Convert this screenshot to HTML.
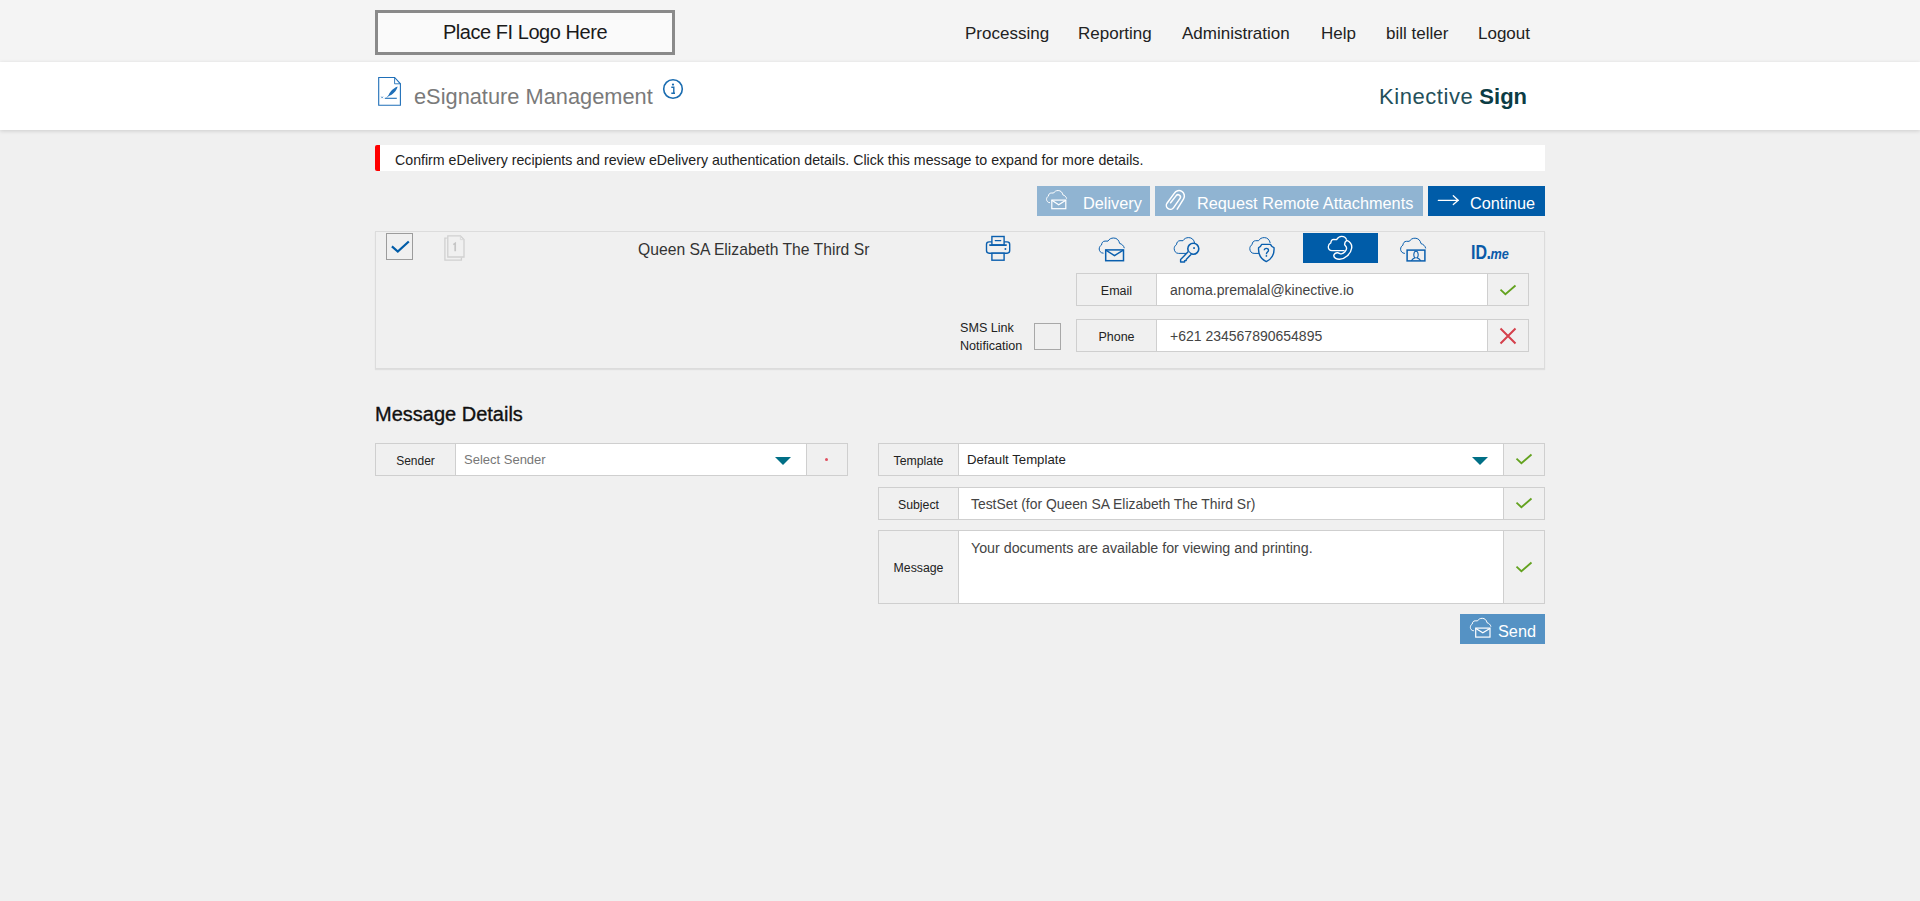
<!DOCTYPE html>
<html><head><meta charset="utf-8">
<style>
*{box-sizing:border-box;margin:0;padding:0}
html,body{width:1920px;height:901px;overflow:hidden;background:#f0f0f0;font-family:"Liberation Sans",sans-serif;color:#222}
.a{position:absolute;white-space:nowrap}
#top{position:absolute;left:0;top:0;width:1920px;height:62px;background:#f4f4f4}
#logo{position:absolute;left:375px;top:10px;width:300px;height:45px;border:3px solid #8a8a8a;background:#fafafa;font-size:20px;letter-spacing:-0.45px;color:#1a1a1a;text-align:center;line-height:38px}
.nav{position:absolute;top:24px;font-size:17px;color:#222;white-space:nowrap;line-height:20px}
#sub{position:absolute;left:0;top:62px;width:1920px;height:68px;background:#fff;box-shadow:0 1px 4px rgba(0,0,0,0.15)}
#title{position:absolute;left:414px;top:84px;font-size:21.8px;color:#7a7a7a;white-space:nowrap;line-height:26px}
#brand{position:absolute;left:1379px;top:84px;font-size:22px;color:#0c3c44;white-space:nowrap;line-height:26px}
#alert{position:absolute;left:375px;top:145px;width:1170px;height:26px;background:#fff;border-left:5px solid #f00;border-radius:2px 0 0 2px}
#alert span{position:absolute;left:15px;top:6.5px;font-size:14.2px;color:#222;white-space:nowrap;line-height:16px}
.btn{position:absolute;top:186px;height:30px;background:#90b4d2;color:#fff;font-size:16.3px;white-space:nowrap}
.btn span{position:absolute;top:7px;line-height:20px}
.btn svg{position:absolute}
#rowbox{position:absolute;left:375px;top:231px;width:1170px;height:138px;border:1px solid #dcdcdc;background:#f0f0f0;box-shadow:0 1px 1px rgba(0,0,0,0.07)}
.box{position:absolute;background:#f0f0f0;border:1px solid #cfcfcf}
.inp{position:absolute;background:#fff;border-top:1px solid #cfcfcf;border-bottom:1px solid #cfcfcf}
.lt{position:absolute;width:100%;text-align:center;white-space:nowrap;color:#222}
.it{position:absolute;white-space:nowrap;color:#444}
svg{display:block}
</style></head><body>
<div id="top">
  <div id="logo">Place FI Logo Here</div>
  <div class="nav" style="left:965px">Processing</div>
  <div class="nav" style="left:1078px">Reporting</div>
  <div class="nav" style="left:1182px">Administration</div>
  <div class="nav" style="left:1321px">Help</div>
  <div class="nav" style="left:1386px">bill teller</div>
  <div class="nav" style="left:1478px">Logout</div>
</div>
<div id="sub"></div>
<!-- doc icon -->
<svg class="a" style="left:377px;top:76px" width="26" height="32" viewBox="0 0 26 32">
  <path d="M1.7 1.5 H17.6 L23.4 7.8 V29.2 H1.7 Z" fill="none" stroke="#1f6fb8" stroke-width="1.1"/>
  <path d="M17.6 1.5 V7.8 H23.4" fill="none" stroke="#1f6fb8" stroke-width="0.9"/>
  <path d="M7.8 22.3 H19.8" stroke="#1f6fb8" stroke-width="1.1"/>
  <path d="M4.3 20.6 l1.6 1.6 M5.9 20.6 l-1.6 1.6" stroke="#1f6fb8" stroke-width="0.7"/>
  <path d="M11.2 20.2 C12 16.5 15.5 12.5 20.6 10.4 C19.8 14.5 16 18.5 11.2 20.2 Z" fill="#1f6fb8"/>
  <path d="M9.8 21.6 L12.5 18.8" stroke="#1f6fb8" stroke-width="0.8"/>
</svg>
<div id="title">eSignature Management</div>
<svg class="a" style="left:662px;top:78px" width="22" height="22" viewBox="0 0 22 22">
  <circle cx="11" cy="11" r="9.3" fill="none" stroke="#1a6cb0" stroke-width="1.6"/>
  <circle cx="11" cy="6.6" r="1.1" fill="#1a6cb0"/>
  <path d="M9.3 9.2 H11.8 V15 M9.3 15.2 H13" fill="none" stroke="#1a6cb0" stroke-width="1.4"/>
</svg>
<div id="brand"><span style="letter-spacing:0.55px;color:#24505a">Kinective</span> <b>Sign</b></div>

<div id="alert"><span>Confirm eDelivery recipients and review eDelivery authentication details. Click this message to expand for more details.</span></div>

<div class="btn" style="left:1037px;width:113px">
  <svg style="left:3px;top:0px" width="36" height="30" viewBox="0 0 36 30">
    <path transform="translate(11.2 13.5) scale(0.8)" d="M-1.5 4 C-4.5 4 -5.8 1.5 -5.8 -0.2 C-5.8 -2 -4.8 -3.5 -3.5 -4.2 C-3.3 -6.5 -2 -8.1 0 -8.1 L3 -8.1 C4.2 -10.2 6.2 -11.2 8.7 -11.2 C11.8 -11.2 14 -9 14.6 -5.8 C16.8 -5.2 18.8 -3.5 19.3 -1" fill="none" stroke="#ffffff" stroke-width="1.0" vector-effect="non-scaling-stroke"/>
    <rect x="11.8" y="14.1" width="14" height="8.6" fill="none" stroke="#ffffff" stroke-width="1.2"/>
    <path d="M11.8 14.3 L18.7 18.7 L25.8 14.3" fill="none" stroke="#ffffff" stroke-width="1.2"/>
  </svg>
  <span style="left:46px">Delivery</span></div>
<div class="btn" style="left:1155px;width:268px">
  <svg style="left:0px;top:0px" width="40" height="30" viewBox="0 0 40 30">
    <path d="M15.6 16.8 L21.2 9.6 A2.4 2.4 0 0 1 25.2 12.2 L18.6 21.6 A3.9 3.9 0 0 1 12 17.2 L19.4 7.2 A5.3 5.3 0 0 1 28.6 12.8 L22.2 23.2" fill="none" stroke="#ffffff" stroke-width="1.5" stroke-linecap="round"/>
  </svg>
  <span style="left:42px">Request Remote Attachments</span></div>
<div class="btn" style="left:1428px;width:117px;background:#005ca8">
  <svg style="left:0px;top:0px" width="40" height="30" viewBox="0 0 40 30">
    <path d="M10.3 14.3 H30.5 M25.3 9.8 L30.2 14.3 L25.3 18.6" fill="none" stroke="#ffffff" stroke-width="1.3" stroke-linecap="round"/>
  </svg>
  <span style="left:42px">Continue</span></div>

<div id="rowbox"></div>
<!-- row contents -->
<div class="a" style="left:386px;top:233px;width:27px;height:27px;border:1.5px solid #9c9c9c"></div>
<svg class="a" style="left:386px;top:233px" width="27" height="27" viewBox="0 0 27 27">
  <path d="M5.9 13.4 L11.8 18.6 L22.8 8.5" fill="none" stroke="#005ca8" stroke-width="2.2"/>
</svg>
<svg class="a" style="left:441px;top:233px" width="28" height="30" viewBox="0 0 28 30">
  <path d="M5.8 5.2 H3.9 V27.2 H20.4 V24.5" fill="none" stroke="#d0d0d0" stroke-width="1.3"/>
  <path d="M6.8 2.9 H19.4 L23 6.6 V24 H6.8 Z" fill="none" stroke="#d0d0d0" stroke-width="1.3"/>
  <path d="M19.4 2.9 V6.6 H23" fill="none" stroke="#d8d8d8" stroke-width="0.9"/>
  <path d="M12.3 11.6 L14.2 10.4 V18.2" fill="none" stroke="#c6c6c6" stroke-width="1.7"/>
</svg>
<div class="a" style="left:638px;top:241px;font-size:15.7px;color:#333;line-height:18px">Queen SA Elizabeth The Third Sr</div>

<!-- printer -->
<svg class="a" style="left:980px;top:230px" width="36" height="36" viewBox="0 0 36 36">
  <rect x="6.5" y="11.9" width="23.2" height="11.3" rx="2.6" fill="none" stroke="#0a5fae" stroke-width="1.4"/>
  <rect x="11.9" y="6.5" width="12.2" height="8.5" fill="#f0f0f0" stroke="#0a5fae" stroke-width="1.4"/>
  <path d="M15.2 10.6 H20.8" stroke="#0a5fae" stroke-width="1.2" stroke-linecap="round"/>
  <path d="M9.8 15.1 H26.2" stroke="#0a5fae" stroke-width="1.6" stroke-linecap="round"/>
  <circle cx="25.4" cy="19" r="0.95" fill="#0a5fae"/>
  <rect x="11.9" y="23.2" width="12.2" height="7" fill="#f0f0f0" stroke="#0a5fae" stroke-width="1.4"/>
</svg>
<!-- email cloud -->
<svg class="a" style="left:1094px;top:232px" width="36" height="34" viewBox="0 0 36 34">
  <path transform="translate(11 17.2) scale(1)" d="M-1.5 4 C-4.5 4 -5.8 1.5 -5.8 -0.2 C-5.8 -2 -4.8 -3.5 -3.5 -4.2 C-3.3 -6.5 -2 -8.1 0 -8.1 L3 -8.1 C4.2 -10.2 6.2 -11.2 8.7 -11.2 C11.8 -11.2 14 -9 14.6 -5.8 C16.8 -5.2 18.8 -3.5 19.3 -1" fill="none" stroke="#0a5fae" stroke-width="1.0" vector-effect="non-scaling-stroke"/>
  <rect x="11.7" y="17.9" width="17.8" height="10.8" fill="#f0f0f0" stroke="#0a5fae" stroke-width="1.5"/>
  <path d="M11.8 18.2 L20.5 23.6 L29.3 18.2" fill="none" stroke="#0a5fae" stroke-width="1.4"/>
</svg>
<!-- key cloud -->
<svg class="a" style="left:1170px;top:232px" width="36" height="34" viewBox="0 0 36 34">
  <path transform="translate(10 16.8) scale(1)" d="M8 4.6 L-1.5 4.6 C-4.5 4.6 -5.8 2 -5.8 -0.2 C-5.8 -2 -4.8 -3.5 -3.5 -4.2 C-3.3 -6.5 -2 -8.1 0 -8.1 L3 -8.1 C4.2 -10.2 6.2 -11.2 8.7 -11.2 C11.8 -11.2 14 -9 14.6 -5.8" fill="none" stroke="#0a5fae" stroke-width="1.0" vector-effect="non-scaling-stroke"/>
  <circle cx="23.3" cy="16.8" r="5.5" fill="#f0f0f0" stroke="#0a5fae" stroke-width="1.6"/>
  <rect x="23.2" y="15.2" width="1.7" height="1.7" fill="#0a5fae"/>
  <path d="M18.4 19.6 L10.6 27.4 V30 H14.6 V28.6 H16.2 V27.4 L21 22.4" fill="#f0f0f0" stroke="#0a5fae" stroke-width="1.4" stroke-linejoin="round"/>
</svg>
<!-- shield cloud -->
<svg class="a" style="left:1246px;top:232px" width="36" height="34" viewBox="0 0 36 34">
  <path transform="translate(9.6 16.8) scale(1)" d="M8 4.6 L-1.5 4.6 C-4.5 4.6 -5.8 2 -5.8 -0.2 C-5.8 -2 -4.8 -3.5 -3.5 -4.2 C-3.3 -6.5 -2 -8.1 0 -8.1 L3 -8.1 C4.2 -10.2 6.2 -11.2 8.7 -11.2 C11.8 -11.2 14 -9 14.6 -5.8" fill="none" stroke="#0a5fae" stroke-width="1.0" vector-effect="non-scaling-stroke"/>
  <path d="M15.6 12.4 H24.6 C25.2 14 26.5 15.2 28 15.6 C28.6 22.5 25.5 27 20.3 29.6 C15 27 12 22.5 12.6 15.6 C14 15.2 15 14 15.6 12.4 Z" fill="#f0f0f0" stroke="#0a5fae" stroke-width="1.4" stroke-linejoin="round"/>
  <path d="M18.3 18.3 C18.3 15.8 22.5 15.8 22.5 18.2 C22.5 20 20.4 20.2 20.4 22.2" fill="none" stroke="#0a5fae" stroke-width="1.4"/>
  <circle cx="20.4" cy="23.9" r="0.85" fill="#0a5fae"/>
</svg>
<!-- phone selected -->
<div class="a" style="left:1303px;top:233px;width:75px;height:30px;background:#005ca8"></div>
<svg class="a" style="left:1322px;top:232px" width="36" height="34" viewBox="0 0 36 34">
  <path d="M22.6 18.7 L10 18.7 C7.5 18.7 6.2 16.8 6.3 14.8 C6.4 12.8 7.5 11.5 8.8 10.9 C9 8.8 10.2 7.3 11.8 7.3 L14.6 7.6 C15.8 5.5 17.5 4.3 19.6 4.3 C22 4.3 24 5.8 24.6 7.8" fill="none" stroke="#ffffff" stroke-width="1.3"/>
  <path d="M24.8 8.3 C28.2 9.6 30 12.5 29.7 16 C29 21.8 23 27 17.6 27.3 C14.6 27.5 12 25.8 11.8 23.9 C11.7 22.2 13.6 20.6 15.6 20.7 C17 20.8 18 22 19.4 21.9 C22 21.4 24.5 18.8 24.6 16.3 C24.7 14.2 22.6 13.6 22.6 12.3 C22.6 10.6 23.6 9 24.8 8.3 Z" fill="#005ca8" stroke="#ffffff" stroke-width="1.4" stroke-linejoin="round"/>
</svg>
<!-- person cloud -->
<svg class="a" style="left:1396px;top:232px" width="36" height="34" viewBox="0 0 36 34">
  <path transform="translate(10.4 17.4) scale(1)" d="M-1.5 4 C-4.5 4 -5.8 1.5 -5.8 -0.2 C-5.8 -2 -4.8 -3.5 -3.5 -4.2 C-3.3 -6.5 -2 -8.1 0 -8.1 L3 -8.1 C4.2 -10.2 6.2 -11.2 8.7 -11.2 C11.8 -11.2 14 -9 14.6 -5.8 C16.8 -5.2 18.8 -3.5 19.3 -1" fill="none" stroke="#0a5fae" stroke-width="1.0" vector-effect="non-scaling-stroke"/>
  <rect x="11.1" y="18.1" width="17.8" height="10.8" fill="#f0f0f0" stroke="#0a5fae" stroke-width="1.5"/>
  <path d="M15.3 28.7 C16.5 26.8 18 26.2 19 25.8 C17.3 24.8 17.3 19.3 20 19.3 C22.7 19.3 22.7 24.8 21 25.8 C22 26.2 23.5 26.8 24.8 28.7" fill="none" stroke="#0a5fae" stroke-width="1.1"/>
</svg>
<!-- ID.me -->
<div class="a" style="left:1471px;top:241px;line-height:22px;color:#0a5aa8;transform:scaleX(0.82);transform-origin:0 0"><span style="font-size:19.5px;font-weight:700;letter-spacing:0px">ID</span><span style="font-size:19.5px;font-weight:700;margin-left:-0.5px">.</span><i style="font-size:15.5px;font-weight:700;letter-spacing:-0.2px;margin-left:-0.5px">me</i></div>

<!-- email row -->
<div class="box" style="left:1076px;top:273px;width:81px;height:33px"><div class="lt" style="top:9px;font-size:12.5px;line-height:16px">Email</div></div>
<div class="inp" style="left:1157px;top:273px;width:330px;height:33px"><div class="it" style="left:13px;top:8px;font-size:14px;line-height:16px;color:#444">anoma.premalal@kinective.io</div></div>
<div class="box" style="left:1487px;top:273px;width:42px;height:33px"></div>
<svg class="a" style="left:1497px;top:281px" width="22" height="18" viewBox="0 0 22 18">
  <path d="M3.5 8.6 L8.4 13.2 L18.5 4.5" fill="none" stroke="#63a21f" stroke-width="1.8"/>
</svg>

<!-- SMS -->
<div class="a" style="left:960px;top:319px;font-size:12.6px;line-height:18px;color:#222">SMS Link<br>Notification</div>
<div class="a" style="left:1034px;top:323px;width:27px;height:27px;border:1.5px solid #a8a8a8"></div>

<!-- phone row -->
<div class="box" style="left:1076px;top:319px;width:81px;height:33px"><div class="lt" style="top:9px;font-size:12.5px;line-height:16px">Phone</div></div>
<div class="inp" style="left:1157px;top:319px;width:330px;height:33px"><div class="it" style="left:13px;top:8px;font-size:14px;line-height:16px;color:#444">+621 234567890654895</div></div>
<div class="box" style="left:1487px;top:319px;width:42px;height:33px"></div>
<svg class="a" style="left:1497px;top:325px" width="22" height="22" viewBox="0 0 22 22">
  <path d="M3.5 3.5 L18.5 18.5 M18.5 3.5 L3.5 18.5" fill="none" stroke="#d5404c" stroke-width="2"/>
</svg>

<!-- Message Details -->
<div class="a" style="left:375px;top:402px;font-size:20px;font-weight:400;-webkit-text-stroke:0.35px #111;line-height:24px;color:#111">Message Details</div>

<div class="box" style="left:375px;top:443px;width:81px;height:33px"><div class="lt" style="top:9px;font-size:12px;line-height:16px">Sender</div></div>
<div class="inp" style="left:456px;top:443px;width:351px;height:33px"><div class="it" style="left:8px;top:8px;font-size:13px;line-height:16px;color:#777">Select Sender</div></div>
<svg class="a" style="left:774px;top:456px" width="18" height="10" viewBox="0 0 18 10"><path d="M1 1 H17 L9 9 Z" fill="#006f86"/></svg>
<div class="box" style="left:806px;top:443px;width:42px;height:33px"></div>
<div class="a" style="left:825px;top:458px;width:3px;height:3px;border-radius:50%;background:#e05060"></div>

<div class="box" style="left:878px;top:443px;width:81px;height:33px"><div class="lt" style="top:9px;font-size:12.3px;line-height:16px">Template</div></div>
<div class="inp" style="left:959px;top:443px;width:545px;height:33px"><div class="it" style="left:8px;top:8px;font-size:13.2px;line-height:16px;color:#222">Default Template</div></div>
<svg class="a" style="left:1471px;top:456px" width="18" height="10" viewBox="0 0 18 10"><path d="M1 1 H17 L9 9 Z" fill="#006f86"/></svg>
<div class="box" style="left:1503px;top:443px;width:42px;height:33px"></div>
<svg class="a" style="left:1513px;top:450px" width="22" height="18" viewBox="0 0 22 18"><path d="M3.5 8.6 L8.4 13.2 L18.5 4.5" fill="none" stroke="#63a21f" stroke-width="1.8"/></svg>

<div class="box" style="left:878px;top:487px;width:81px;height:33px"><div class="lt" style="top:9px;font-size:12.3px;line-height:16px">Subject</div></div>
<div class="inp" style="left:959px;top:487px;width:545px;height:33px"><div class="it" style="left:12px;top:8px;font-size:13.9px;line-height:16px;color:#444">TestSet (for Queen SA Elizabeth The Third Sr)</div></div>
<div class="box" style="left:1503px;top:487px;width:42px;height:33px"></div>
<svg class="a" style="left:1513px;top:494px" width="22" height="18" viewBox="0 0 22 18"><path d="M3.5 8.6 L8.4 13.2 L18.5 4.5" fill="none" stroke="#63a21f" stroke-width="1.8"/></svg>

<div class="box" style="left:878px;top:530px;width:81px;height:74px"><div class="lt" style="top:29px;font-size:12.3px;line-height:16px">Message</div></div>
<div class="inp" style="left:959px;top:530px;width:545px;height:74px"><div class="it" style="left:12px;top:9px;font-size:14.25px;line-height:16px;color:#444">Your documents are available for viewing and printing.</div></div>
<div class="box" style="left:1503px;top:530px;width:42px;height:74px"></div>
<svg class="a" style="left:1513px;top:558px" width="22" height="18" viewBox="0 0 22 18"><path d="M3.5 8.6 L8.4 13.2 L18.5 4.5" fill="none" stroke="#63a21f" stroke-width="1.8"/></svg>

<div class="btn" style="left:1460px;top:614px;width:85px;background:#5592c4">
  <svg style="left:0px;top:-2px" width="36" height="34" viewBox="0 0 36 34">
    <path transform="translate(15.1 15.5) scale(0.82)" d="M-1.5 4 C-4.5 4 -5.8 1.5 -5.8 -0.2 C-5.8 -2 -4.8 -3.5 -3.5 -4.2 C-3.3 -6.5 -2 -8.1 0 -8.1 L3 -8.1 C4.2 -10.2 6.2 -11.2 8.7 -11.2 C11.8 -11.2 14 -9 14.6 -5.8 C16.8 -5.2 18.8 -3.5 19.3 -1" fill="none" stroke="#ffffff" stroke-width="1.0" vector-effect="non-scaling-stroke"/>
    <rect x="15.7" y="16.1" width="14.3" height="9" fill="none" stroke="#ffffff" stroke-width="1.2"/>
    <path d="M15.8 16.4 L22.8 20.8 L29.9 16.4" fill="none" stroke="#ffffff" stroke-width="1.2"/>
  </svg>
  <span style="left:38px">Send</span></div>

</body></html>
